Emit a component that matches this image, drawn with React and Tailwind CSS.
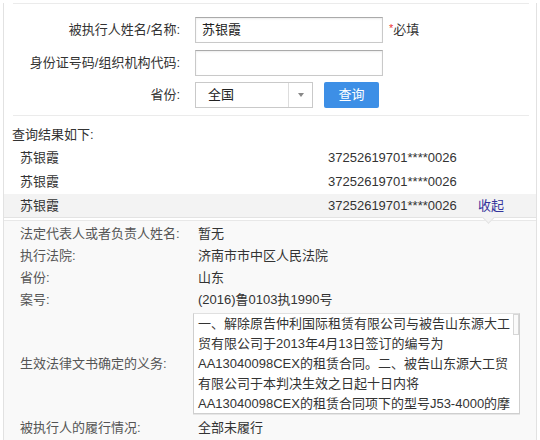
import React from "react";

const results = [
  { name: "苏银霞", id: "37252619701****0026" },
  { name: "苏银霞", id: "37252619701****0026" },
  { name: "苏银霞", id: "37252619701****0026", open: true },
];

const details = [
  ["法定代表人或者负责人姓名:", "暂无"],
  ["执行法院:", "济南市市中区人民法院"],
  ["省份:", "山东"],
  ["案号:", "(2016)鲁0103执1990号"],
];

const dutyLines = [
  "一、解除原告仲利国际租赁有限公司与被告山东源大工",
  "贸有限公司于2013年4月13日签订的编号为",
  "AA13040098CEX的租赁合同。二、被告山东源大工贸",
  "有限公司于本判决生效之日起十日内将",
  "AA13040098CEX的租赁合同项下的型号J53-4000的摩",
];

function FormRow({ label, children, className = "" }) {
  return (
    <div className={"flex items-center h-[26px] " + className}>
      <div className="w-[167px] text-right text-[13px] text-[#333]">{label}</div>
      <div className="ml-[15px] flex items-center h-full">{children}</div>
    </div>
  );
}

export default function App() {
  return (
    <div className="w-[540px] h-[440px] overflow-hidden bg-white text-[13px] text-[#333] font-['Liberation_Sans','Noto_Sans_CJK_SC',sans-serif]">
      <div className="ml-[3px] w-[534px] h-full border-l border-r border-[#e2e2e2]">
        {/* search form */}
        <div className="ml-[9px] mr-[7px] mt-[3px] border-t border-b border-[#ebebeb] pt-[13px] pb-[7px]">
          <FormRow label="被执行人姓名/名称:">
            <div className="w-[188px] h-[26px] border border-[#c9c9c9] border-t-[#aaa] shadow-[inset_0_1px_2px_rgba(0,0,0,0.08)] pl-[6px] flex items-center text-[13px] text-[#222]">
              苏银霞
            </div>
            <span className="ml-[6px] text-[13px] text-[#333]">
              <span className="text-[#e33] text-[11px] relative -top-[2px]">*</span>必填
            </span>
          </FormRow>
          <FormRow label="身份证号码/组织机构代码:" className="mt-[7px]">
            <div className="w-[188px] h-[26px] border border-[#c9c9c9] border-t-[#aaa] shadow-[inset_0_1px_2px_rgba(0,0,0,0.08)]" />
          </FormRow>
          <FormRow label="省份:" className="mt-[6px]">
            <div className="w-[118px] h-[26px] border border-[#c9c9c9] flex items-stretch bg-white">
              <div className="flex-1 pl-[12px] flex items-center text-[13px] text-[#222]">全国</div>
              <div className="w-[24px] border-l border-[#ddd] flex items-center justify-center">
                <div className="w-0 h-0 border-l-[3px] border-r-[3px] border-t-[4px] border-l-transparent border-r-transparent border-t-[#888]" />
              </div>
            </div>
            <button className="ml-[11px] w-[55px] h-[26px] bg-[#3d8fe6] text-white text-[13px] rounded-[2px] flex items-center justify-center">
              查询
            </button>
          </FormRow>
        </div>

        {/* results */}
        <div className="pt-[7px]">
          <div className="pl-[8px] h-[23px] leading-[23px]">查询结果如下:</div>
          {results.map((r, i) => (
            <div
              key={i}
              className={
                "relative flex items-center h-[24px] pl-[16px] " +
                (r.open ? "bg-[#f3f3f3] border-b border-[#e3e3e3]" : "")
              }
            >
              <div className="w-[308px]">{r.name}</div>
              <div className="w-[150px]">{r.id}</div>
              {r.open && <div className="text-[#34349c]">收起</div>}
              {r.open && (
                <div className="absolute left-[480px] top-[19px] w-[9px] h-[9px] rotate-45 bg-[#f3f3f3] border-r border-b border-[#e3e3e3]" />
              )}
            </div>
          ))}
        </div>

        {/* detail */}
        <div className="mt-[2px] border-t border-[#e8e8e8] bg-[#f9f9f9] pt-[2px] pl-[16px] h-full">
          {details.map(([k, v]) => (
            <div key={k} className="flex items-center h-[22px]">
              <div className="w-[178px] text-[#555]">{k}</div>
              <div>{v}</div>
            </div>
          ))}
          <div className="flex items-center mt-[2px]">
            <div className="w-[173px] text-[#555]">生效法律文书确定的义务:</div>
            <div className="relative w-[327px] h-[101px] overflow-hidden bg-white border border-[#cfcfcf] border-t-[#e0e0e0] shadow-[0_1px_0_#e6e6e6] pl-[4px] pr-[9px]">
              {dutyLines.map((l, i) => (
                <div key={i} className="h-[20px] leading-[20px] whitespace-nowrap">{l}</div>
              ))}
              <div className="absolute right-0 top-0 w-[6px] h-[21px] border border-[#d6d6d6] bg-[#fafafa]" />
            </div>
          </div>
          <div className="flex items-center h-[22px] mt-[3px]">
            <div className="w-[178px] text-[#555]">被执行人的履行情况:</div>
            <div>全部未履行</div>
          </div>
        </div>
      </div>
    </div>
  );
}
